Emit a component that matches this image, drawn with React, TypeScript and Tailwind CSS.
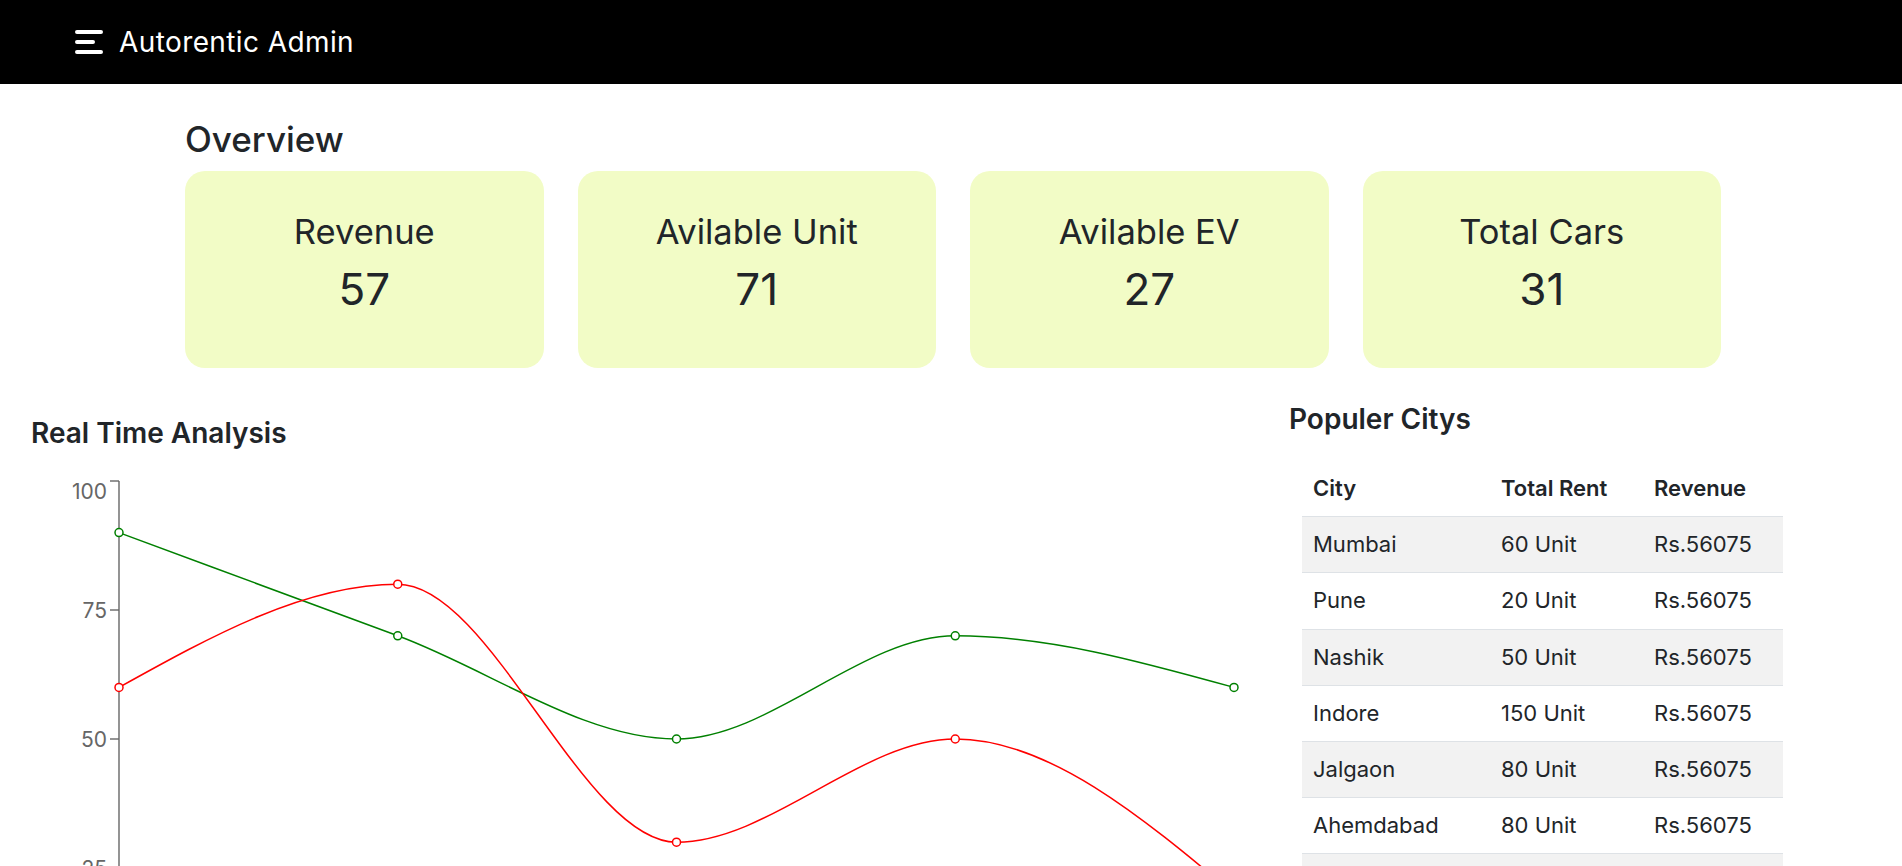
const cards = [
  { title: "Revenue", value: 57 },
  { title: "Avilable Unit", value: 71 },
  { title: "Avilable EV", value: 27 },
  { title: "Total Cars", value: 31 },
];

const cities = [
  { city: "Mumbai", rent: "60 Unit", revenue: "Rs.56075" },
  { city: "Pune", rent: "20 Unit", revenue: "Rs.56075" },
  { city: "Nashik", rent: "50 Unit", revenue: "Rs.56075" },
  { city: "Indore", rent: "150 Unit", revenue: "Rs.56075" },
  { city: "Jalgaon", rent: "80 Unit", revenue: "Rs.56075" },
  { city: "Ahemdabad", rent: "80 Unit", revenue: "Rs.56075" },
  { city: "Surat", rent: "40 Unit", revenue: "Rs.56075" },
];

const xs = [119, 397.75, 676.5, 955.25, 1234];
const green = [90, 70, 50, 70, 60];
const red = [60, 80, 30, 50, 20];
// chart svg starts at page y = 470
const TOP = 470;
const yOf = (v: number) => 997 - v * 5.16 - TOP;

// same maths as d3 curveMonotoneX
function monotone(vals: number[]) {
  const pts = vals.map((v, i) => [xs[i], yOf(v)]);
  const n = pts.length;
  const m: number[] = new Array(n).fill(0);
  const sign = (x: number) => (x < 0 ? -1 : 1);
  for (let i = 1; i < n - 1; i++) {
    const h0 = pts[i][0] - pts[i - 1][0];
    const h1 = pts[i + 1][0] - pts[i][0];
    const s0 = (pts[i][1] - pts[i - 1][1]) / h0;
    const s1 = (pts[i + 1][1] - pts[i][1]) / h1;
    const p = (s0 * h1 + s1 * h0) / (h0 + h1);
    m[i] = (sign(s0) + sign(s1)) * Math.min(Math.abs(s0), Math.abs(s1), 0.5 * Math.abs(p)) || 0;
  }
  const h = pts[1][0] - pts[0][0];
  m[0] = (3 * (pts[1][1] - pts[0][1]) / h - m[1]) / 2;
  const hl = pts[n - 1][0] - pts[n - 2][0];
  m[n - 1] = (3 * (pts[n - 1][1] - pts[n - 2][1]) / hl - m[n - 2]) / 2;
  let d = `M${pts[0][0]},${pts[0][1]}`;
  for (let i = 0; i < n - 1; i++) {
    const [x0, y0] = pts[i];
    const [x1, y1] = pts[i + 1];
    const dx = (x1 - x0) / 3;
    d += `C${x0 + dx},${y0 + dx * m[i]},${x1 - dx},${y1 - dx * m[i + 1]},${x1},${y1}`;
  }
  return d;
}

function Chart() {
  const ticks = [100, 75, 50, 25, 0];
  return (
    <svg width="1280" height="560" className="block mt-[20px]">
      <line x1="119" y1={yOf(100)} x2="119" y2={yOf(0)} stroke="#666" strokeWidth="1.4" />
      {ticks.map((t) => (
        <g key={t}>
          <line x1="110" y1={yOf(t)} x2="119" y2={yOf(t)} stroke="#666" strokeWidth="1.4" />
          <text
            x="107"
            y={t === 100 ? yOf(t) + 10 : yOf(t)}
            textAnchor="end"
            dominantBaseline="central"
            fill="#666"
            fontSize="21"
          >
            {t}
          </text>
        </g>
      ))}
      <path d={monotone(green)} fill="none" stroke="green" strokeWidth="1.5" />
      <path d={monotone(red)} fill="none" stroke="red" strokeWidth="1.5" />
      {green.map((v, i) => (
        <circle key={"g" + i} cx={xs[i]} cy={yOf(v)} r="4" fill="#fff" stroke="green" strokeWidth="1.5" />
      ))}
      {red.map((v, i) => (
        <circle key={"r" + i} cx={xs[i]} cy={yOf(v)} r="4" fill="#fff" stroke="red" strokeWidth="1.5" />
      ))}
    </svg>
  );
}

export default function App() {
  return (
    <div className="h-screen overflow-hidden bg-white text-[#212529] font-['Inter',sans-serif]">
      <header className="h-[84px] bg-black flex items-center pl-[75px] gap-4">
        <svg width="28" height="24" viewBox="0 0 28 24">
          <path d="M2 2h24M2 12h16M2 22h24" stroke="#fff" strokeWidth="4" strokeLinecap="round" />
        </svg>
        <span className="text-white text-[28px] leading-[32px] tracking-[0.4px]">Autorentic Admin</span>
      </header>

      <section className="pl-[185px] pt-[33px]">
        <h1 className="text-[35px] leading-[44px] font-medium mb-[10px]">Overview</h1>
        <div className="grid grid-cols-4 gap-[34px] w-[1536px]">
          {cards.map((c) => (
            <div key={c.title} className="h-[197px] rounded-[20px] bg-[#f2fcc6] flex flex-col items-center pt-[41px]">
              <div className="text-[34.5px] leading-[40px]">{c.title}</div>
              <div className="text-[44px] leading-[54px] mt-[10px]">{c.value}</div>
            </div>
          ))}
        </div>
      </section>

      <section className="flex">
        <div className="w-[1289px]">
          <h2 className="pl-[31px] pt-[48px] text-[28px] leading-[34px] font-semibold">Real Time Analysis</h2>
          <Chart />
        </div>
        <div className="flex-1">
          <h2 className="pt-[34px] text-[28px] leading-[34px] font-semibold">Populer Citys</h2>
          <table className="mt-[25px] ml-[13px] w-[481px] text-[22px] leading-[33.2px] border-collapse">
            <thead>
              <tr>
                <th className="w-[188px] text-left font-semibold px-[11px] py-[11px]">City</th>
                <th className="w-[153px] text-left font-semibold px-[11px] py-[11px]">Total Rent</th>
                <th className="text-left font-semibold px-[11px] py-[11px]">Revenue</th>
              </tr>
            </thead>
            <tbody>
              {cities.map((r, i) => (
                <tr key={r.city} className={"border-t border-[#dee2e6] " + (i % 2 === 0 ? "bg-[#f2f2f2]" : "bg-white")}>
                  <td className="px-[11px] py-[11px]">{r.city}</td>
                  <td className="px-[11px] py-[11px]">{r.rent}</td>
                  <td className="px-[11px] py-[11px]">{r.revenue}</td>
                </tr>
              ))}
            </tbody>
          </table>
        </div>
      </section>
    </div>
  );
}
